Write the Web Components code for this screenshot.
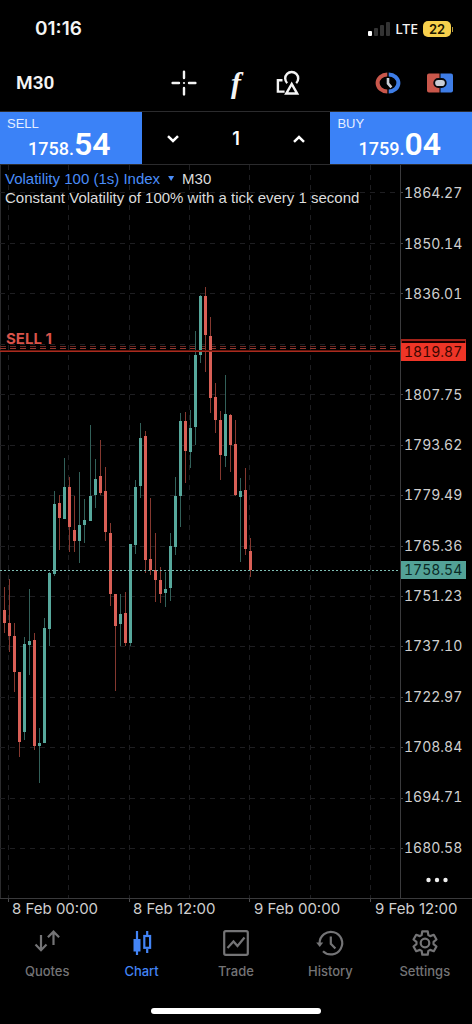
<!DOCTYPE html>
<html lang="en">
<head>
<meta charset="utf-8">
<meta name="viewport" content="width=device-width, initial-scale=1">
<title>Volatility 100 (1s) Index, M30</title>
<style>
  html { background: #000; }
  body { margin: 0; background: #000; color: #f4f4f4; font-family: Inter, "Liberation Sans", sans-serif; }
</style>
</head>
<body>
<app-screen>
  <status-bar slot="top" time="01:16" network="LTE" battery="22"></status-bar>
  <tool-bar slot="top">M30</tool-bar>
  <trade-panel slot="top"></trade-panel>
  <price-chart>
    <a slot="symbol" href="#symbol">Volatility 100 (1s) Index</a>
    <span slot="period">M30</span>
    <span slot="about">Constant Volatility of 100% with a tick every 1 second</span>
  </price-chart>
  <time-axis slot="bottom">
    <span>8 Feb 00:00</span><span>8 Feb 12:00</span><span>9 Feb 00:00</span><span>9 Feb 12:00</span>
  </time-axis>
  <tab-bar slot="bottom">
    <tab-item icon="quotes">Quotes</tab-item>
    <tab-item icon="chart" active>Chart</tab-item>
    <tab-item icon="trade">Trade</tab-item>
    <tab-item icon="history">History</tab-item>
    <tab-item icon="settings">Settings</tab-item>
  </tab-bar>
  <home-indicator slot="bottom"></home-indicator>
</app-screen>

<script>
function define(name, html, setup) {
  const template = document.createElement('template');
  template.innerHTML = html;
  customElements.define(name, class extends HTMLElement {
    connectedCallback() {
      if (this.shadowRoot) return;
      const root = this.attachShadow({ mode: 'open' });
      root.append(template.content.cloneNode(true));
      if (setup) setup.call(this, root);
    }
  });
}

define('app-screen', `
  <style>
    :host { display: flex; flex-direction: column; min-height: 100vh; background: #000; }
    main { flex: 1; display: flex; flex-direction: column; }
  </style>
  <slot name="top"></slot>
  <main><slot></slot></main>
  <slot name="bottom"></slot>`);

define('status-bar', `
  <style>
    :host { display: flex; justify-content: space-between; align-items: center; height: 58px; padding: 0 19px 0 35px; }
    time { font-size: 19px; font-weight: 600; line-height: 22px; }
    .right { display: flex; align-items: center; gap: 5px; }
    .net { font: 500 14px/18px "Noto Sans", sans-serif; }
    .battery { display: flex; align-items: center; gap: 1px; }
    .level { width: 28px; height: 16px; border-radius: 5px; background: #f7d04c; color: #1b1600; font-size: 13px; font-weight: 600; line-height: 16px; text-align: center; }
    .nub { width: 1px; height: 5px; background: #b79a38; }
    svg { display: block; }
  </style>
  <time></time>
  <div class="right">
    <svg width="22" height="14" viewBox="0 0 22 14" aria-hidden="true">
      <rect x="0" y="9" width="4" height="5" rx="1" fill="#fff"/>
      <rect x="6" y="6" width="4" height="8" rx="1" fill="#333"/>
      <rect x="12" y="3" width="4" height="11" rx="1" fill="#333"/>
      <rect x="18" y="0" width="4" height="14" rx="1" fill="#333"/>
    </svg>
    <span class="net"></span>
    <span class="battery"><span class="level"></span><span class="nub"></span></span>
  </div>`, function (root) {
  root.querySelector('time').textContent = this.getAttribute('time');
  root.querySelector('.net').textContent = this.getAttribute('network');
  root.querySelector('.level').textContent = this.getAttribute('battery');
});

define('tool-bar', `
  <style>
    :host { display: grid; grid-template-columns: 1fr auto 1fr; align-items: center; height: 50px; padding: 0 6px 3px 16px; }
    .period { justify-self: start; font: 600 19px/24px Roboto, sans-serif; }
    .group { display: flex; }
    .group:last-child { justify-self: end; }
    .middle { margin-right: 10px; }
    button { appearance: none; border: 0; padding: 0; margin: 0; background: none; color: #f4f4f4; width: 52px; height: 50px; display: grid; place-items: center; font: inherit; }
    button.period { width: auto; }
    .fn { font: italic 700 30px/30px "Liberation Serif", serif; }
    svg { display: block; }
  </style>
  <button class="period"><slot></slot></button>
  <div class="group middle">
    <button aria-label="Crosshair"><svg width="26" height="26" viewBox="0 0 26 26" fill="none" stroke="currentColor" stroke-width="2.4" stroke-linecap="round"><path d="M13 1.600V8M13 18v6.400M1.600 13H8M18 13h6.400"/><circle cx="13" cy="13" r="1.100" fill="currentColor" stroke="none"/></svg></button>
    <button class="fn" aria-label="Indicators">f</button>
    <button aria-label="Objects"><svg width="26" height="26" viewBox="0 0 26 26" fill="none" stroke="currentColor" stroke-width="2.400"><path d="M7.500 10.200H2.900V21.600H9.600"/><path d="M12.200 13.200A6.500 6.500 0 1 1 21.200 13.200"/><path d="M16.700 14L11.300 23.500H22.100Z" stroke-width="2.500"/></svg></button>
  </div>
  <div class="group">
    <button aria-label="Trading hours"><svg width="26" height="24" viewBox="0 0 26 24" fill="none"><path d="M12.300 3.500A9.700 8.500 0 0 0 12.300 20.500" stroke="#c9574b" stroke-width="4"/><path d="M13.700 3.500A9.700 8.500 0 0 1 13.700 20.500" stroke="#3e7de6" stroke-width="4"/><path d="M13 7v5.400l3.400 3.900" stroke="#c9ced6" stroke-width="2.600"/></svg></button>
    <button aria-label="One click trading"><svg width="26" height="20" viewBox="0 0 26 20"><path d="M2 .5H12.500V19.500H2A2 2 0 0 1 0 17.500V2.500A2 2 0 0 1 2 .5Z" fill="#c9574b"/><path d="M13.500 .5H24A2 2 0 0 1 26 2.500V17.500A2 2 0 0 1 24 19.500H13.500Z" fill="#3e7de6"/><rect x="7.200" y="6" width="11.600" height="8" rx="4" fill="#c9ced6" stroke="#07080c" stroke-width="1.800"/></svg></button>
  </div>`);

define('trade-panel', `
  <style>
    :host { display: grid; grid-template-columns: 3fr 4fr 3fr; height: 52px; border-top: 1px solid #2b2b2d; border-bottom: 1px solid #2b2b2d; }
    button { appearance: none; border: 0; margin: 0; padding: 0; background: none; color: #fff; font: inherit; }
    .deal { background: #3b82f7; display: flex; flex-direction: column; padding: 4px 31px 0 7px; text-align: left; }
    .side { font: 13px/15px "Liberation Sans", sans-serif; color: #e4eeff; }
    .price { align-self: flex-end; display: flex; align-items: baseline; font: 500 18px/26px Roboto, sans-serif; }
    .price b { font-size: 32px; font-weight: 600; line-height: 26px; }
    .lots { display: grid; grid-template-columns: 1fr 1fr 1fr; align-items: center; padding-top: 2px; }
    .lots button { height: 48px; display: grid; place-items: center; }
    input { width: 100%; box-sizing: border-box; border: 0; padding: 0; background: none; color: #fff; text-align: center; font: 600 18px/24px Inter, sans-serif; }
    svg { display: block; }
  </style>
  <button class="deal"><span class="side">SELL</span><span class="price">1758.<b>54</b></span></button>
  <div class="lots">
    <button aria-label="Decrease volume"><svg width="12" height="8" viewBox="0 0 12 8" fill="none" stroke="#fff" stroke-width="2.500"><path d="M1 1.200L6 6L11 1.200"/></svg></button>
    <input aria-label="Volume" value="1" inputmode="decimal">
    <button aria-label="Increase volume"><svg width="12" height="8" viewBox="0 0 12 8" fill="none" stroke="#fff" stroke-width="2.500"><path d="M1 6.800L6 2L11 6.800"/></svg></button>
  </div>
  <button class="deal"><span class="side">BUY</span><span class="price">1759.<b>04</b></span></button>`);

/* [direction, high, body top, body bottom, low] on the plot's vertical scale */
const candles = [
  ['d',587,610,623,633],['d',579,623,636,652],['d',623,636,672,692],['d',672,672,742,757],['u',637,644,732,740],
  ['u',589,641,645,675],['d',633,640,746,750],['u',728,743,746,783],['u',618,628,743,743],['u',572,573,629,646],
  ['u',491,504,574,576],['d',495,503,518,550],['u',458,487,519,519],['d',477,487,527,552],['d',496,530,541,552],
  ['u',472,525,541,563],['u',499,520,525,543],['u',425,496,521,521],['u',459,479,495,508],['d',440,476,493,495],
  ['d',467,491,532,541],['d',523,533,594,606],['d',594,594,626,691],['u',594,614,624,646],['d',592,613,643,646],
  ['u',544,544,643,646],['u',480,487,545,554],['u',423,438,486,498],['d',431,436,560,573],['d',498,559,570,575],
  ['d',533,570,580,602],['d',567,580,594,603],['u',572,589,593,607],['u',533,546,588,601],['u',477,496,547,555],
  ['u',413,421,496,527],['d',412,421,451,483],['u',410,428,452,468],['u',331,355,427,445],['u',295,296,355,363],
  ['d',287,296,335,372],['d',317,336,398,413],['d',383,397,420,433],['d',411,420,455,480],['u',375,414,456,467],
  ['d',414,415,445,472],['d',420,444,495,496],['u',478,491,497,562],['d',468,490,549,555],['d',538,551,570,577]
];
const prices = ['1864.27','1850.14','1836.01','','1807.75','1793.62','1779.49','1765.36','1751.23','1737.10','1722.97','1708.84','1694.71','1680.58'];

define('price-chart', `
  <style>
    :host { flex: 1; display: grid; grid-template-columns: 1fr 72px; min-height: 480px; border-bottom: 1px solid #3a3a3c; }
    .plot { position: relative; display: flex; }
    .plot svg { flex: 1; width: 0; min-width: 100%; height: 0; min-height: 100%; display: block; overflow: visible; }
    .legend { position: absolute; inset: 4px auto auto 5px; font: 15px/19px "Liberation Sans", sans-serif; color: #dcdcdc; white-space: nowrap; }
    .legend div { display: flex; align-items: center; gap: 8px; }
    ::slotted(a) { color: #4a8df8; text-decoration: none; }
    .caret { width: 6px; height: 5px; background: #4a8df8; clip-path: polygon(0 0, 100% 0, 50% 100%); }
    .order { position: absolute; left: 6px; top: 24%; margin-top: -10px; font: 700 15px/16px Inter, sans-serif; color: #d9534a; }
    .axis { position: relative; display: flex; flex-direction: column; border-left: 1px solid #3a3a3c; padding-top: 3px; font-size: 14px; font-variant-numeric: tabular-nums; line-height: 18px; color: #cfcfcf; }
    .row { flex: 1; display: flex; align-items: center; padding-left: 3px; }
    .tag { position: absolute; left: 0; width: 62px; box-sizing: content-box; padding-left: 3px; height: 18px; transform: translateY(-50%); }
    .ask { top: 25.500%; background: #ee3527; color: #3a0600; box-shadow: 0 -3px 0 -1px #1a0000, 0 -4px 0 0 #a32219; }
    .bid { top: 55.300%; background: #53a297; color: #0a2a26; }
    .more { appearance: none; border: 0; margin: 0; padding: 0 0 12px; height: 25px; background: none; display: grid; place-items: center; color: #eee; }
  </style>
  <div class="plot">
    <svg viewBox="0 165 400 733" preserveAspectRatio="none" role="img" aria-label="Candlestick chart"></svg>
    <div class="legend">
      <div><slot name="symbol"></slot><span class="caret"></span><slot name="period"></slot></div>
      <slot name="about"></slot>
    </div>
    <span class="order">SELL 1</span>
  </div>
  <div class="axis">
    <span class="tag ask">1819.87</span>
    <span class="tag bid">1758.54</span>
    <button class="more" aria-label="More"><svg width="22" height="6" viewBox="0 0 22 6" fill="currentColor"><circle cx="2.500" cy="3" r="2.200"/><circle cx="11" cy="3" r="2.200"/><circle cx="19.500" cy="3" r="2.200"/></svg></button>
  </div>`, function (root) {
  const line = (x1, y1, x2, y2, color, dash = 'none', w = 1) =>
    `<line x1="${x1}" y1="${y1}" x2="${x2}" y2="${y2}" stroke="${color}" stroke-width="${w}" stroke-dasharray="${dash}"/>`;
  let out = line(.5, 165, .5, 898, '#2b2b2d');
  for (let i = 0; i < 7; i++) {
    const x = Math.round(9 + i * 60.3) - .5;
    out += line(x, 165, x, 898, '#1e1e21', '5 5');
    if (i % 2 === 0) out += line(x, 899, x, 902, '#4a4a4c');
  }
  for (let i = 0; i < 14; i++) {
    const y = Math.round(192.4 + i * 50.45) + .5;
    out += line(0, y, 400, y, '#1e1e21', '5 5') + line(400, y, 403, y, '#4a4a4c');
  }
  out += line(0, 346.5, 400, 346.5, '#6d2a25', '6 4') + line(0, 348.5, 400, 348.5, '#96372f', '6 4');
  candles.forEach(([dir, high, top, bottom, low], i) => {
    const x = Math.round(4 + i * 5.03);
    out += line(x + .5, high, x + .5, low, dir === 'u' ? '#326059' : '#84382f');
    out += `<rect x="${x - 1}" y="${top}" width="3" height="${bottom - top}" fill="${dir === 'u' ? '#57a89c' : '#d95f56'}"/>`;
  });
  out += `<rect x="0" y="350" width="400" height="1" fill="#64180f"/><rect x="0" y="351" width="400" height="1" fill="#a82a1e"/>`;
  out += line(0, 570.5, 400, 570.5, '#7fc0b5', '2 2');
  root.querySelector('.plot svg').innerHTML = out;
  const more = root.querySelector('.more');
  prices.forEach(price => {
    const row = document.createElement('span');
    row.className = 'row';
    row.textContent = price;
    more.before(row);
  });
});

define('time-axis', `
  <style>
    :host { display: grid; grid-template-columns: 121fr 121fr 121fr 97fr; padding-left: 12px; height: 21px; font-size: 15px; line-height: 20px; color: #cfcfcf; white-space: nowrap; }
    ::slotted(span) { min-width: 0; }
  </style>
  <slot></slot>`);

define('tab-bar', `
  <style>
    :host { display: block; }
    nav { display: grid; grid-template-columns: repeat(5, 1fr); height: 70px; }
  </style>
  <nav aria-label="Main"><slot></slot></nav>`);

function gear() {
  const points = [];
  for (let i = 0; i < 6; i++) {
    for (const [offset, radius] of [[-23, 8.6], [-13, 12], [13, 12], [23, 8.6]]) {
      const a = (i * 60 - 90 + offset) * Math.PI / 180;
      points.push((13 + radius * Math.cos(a)).toFixed(2) + ',' + (13 + radius * Math.sin(a)).toFixed(2));
    }
  }
  return `<polygon points="${points.join(' ')}" stroke-linejoin="round"/><circle cx="13" cy="13" r="4.300"/>`;
}
const icons = {
  quotes: '<path d="M7 5v14.500M1.500 14.600L7 20.200L12.500 14.600M19.500 15V1.800M13.900 7.200L19.500 1.600L25.100 7.200"/>',
  chart: '<path d="M8 1v24M18.200 1v4M18.200 19v4"/><rect x="4.500" y="9" width="7" height="12.500" fill="currentColor" stroke="none"/><rect x="15.300" y="6" width="5.800" height="11.800"/>',
  trade: '<rect x="1.200" y="1.200" width="23.600" height="23.600" rx="1.500"/><path d="M4.500 18L10.500 11.500L14.500 16L21.500 7.500"/>',
  history: '<path d="M2.600 13A11.300 11.300 0 1 1 6 21.200"/><path d="M-.8 12.400H6.200L2.700 17Z" fill="currentColor" stroke="none"/><path d="M13.800 6.500v7.200l4.600 4.700"/>',
  settings: gear()
};

define('tab-item', `
  <style>
    :host { display: block; color: #747476; }
    :host([active]) { color: #4384f5; }
    a { display: flex; flex-direction: column; align-items: center; gap: 7px; padding-top: 10px; color: inherit; text-decoration: none; font-size: 13px; font-weight: 500; line-height: 16px; }
    svg { display: block; overflow: visible; }
  </style>
  <a><svg width="26" height="26" viewBox="0 0 26 26" fill="none" stroke="currentColor" stroke-width="2.200" aria-hidden="true"></svg><span><slot></slot></span></a>`, function (root) {
  const name = this.getAttribute('icon');
  root.querySelector('svg').innerHTML = icons[name];
  const link = root.querySelector('a');
  link.href = '#' + name;
  if (this.hasAttribute('active')) link.setAttribute('aria-current', 'page');
});

define('home-indicator', `
  <style>
    :host { display: flex; justify-content: center; height: 16px; padding-top: 18px; }
    span { width: 36%; height: 6px; border-radius: 3px; background: #fff; }
  </style>
  <span></span>`);
</script>
</body>
</html>
